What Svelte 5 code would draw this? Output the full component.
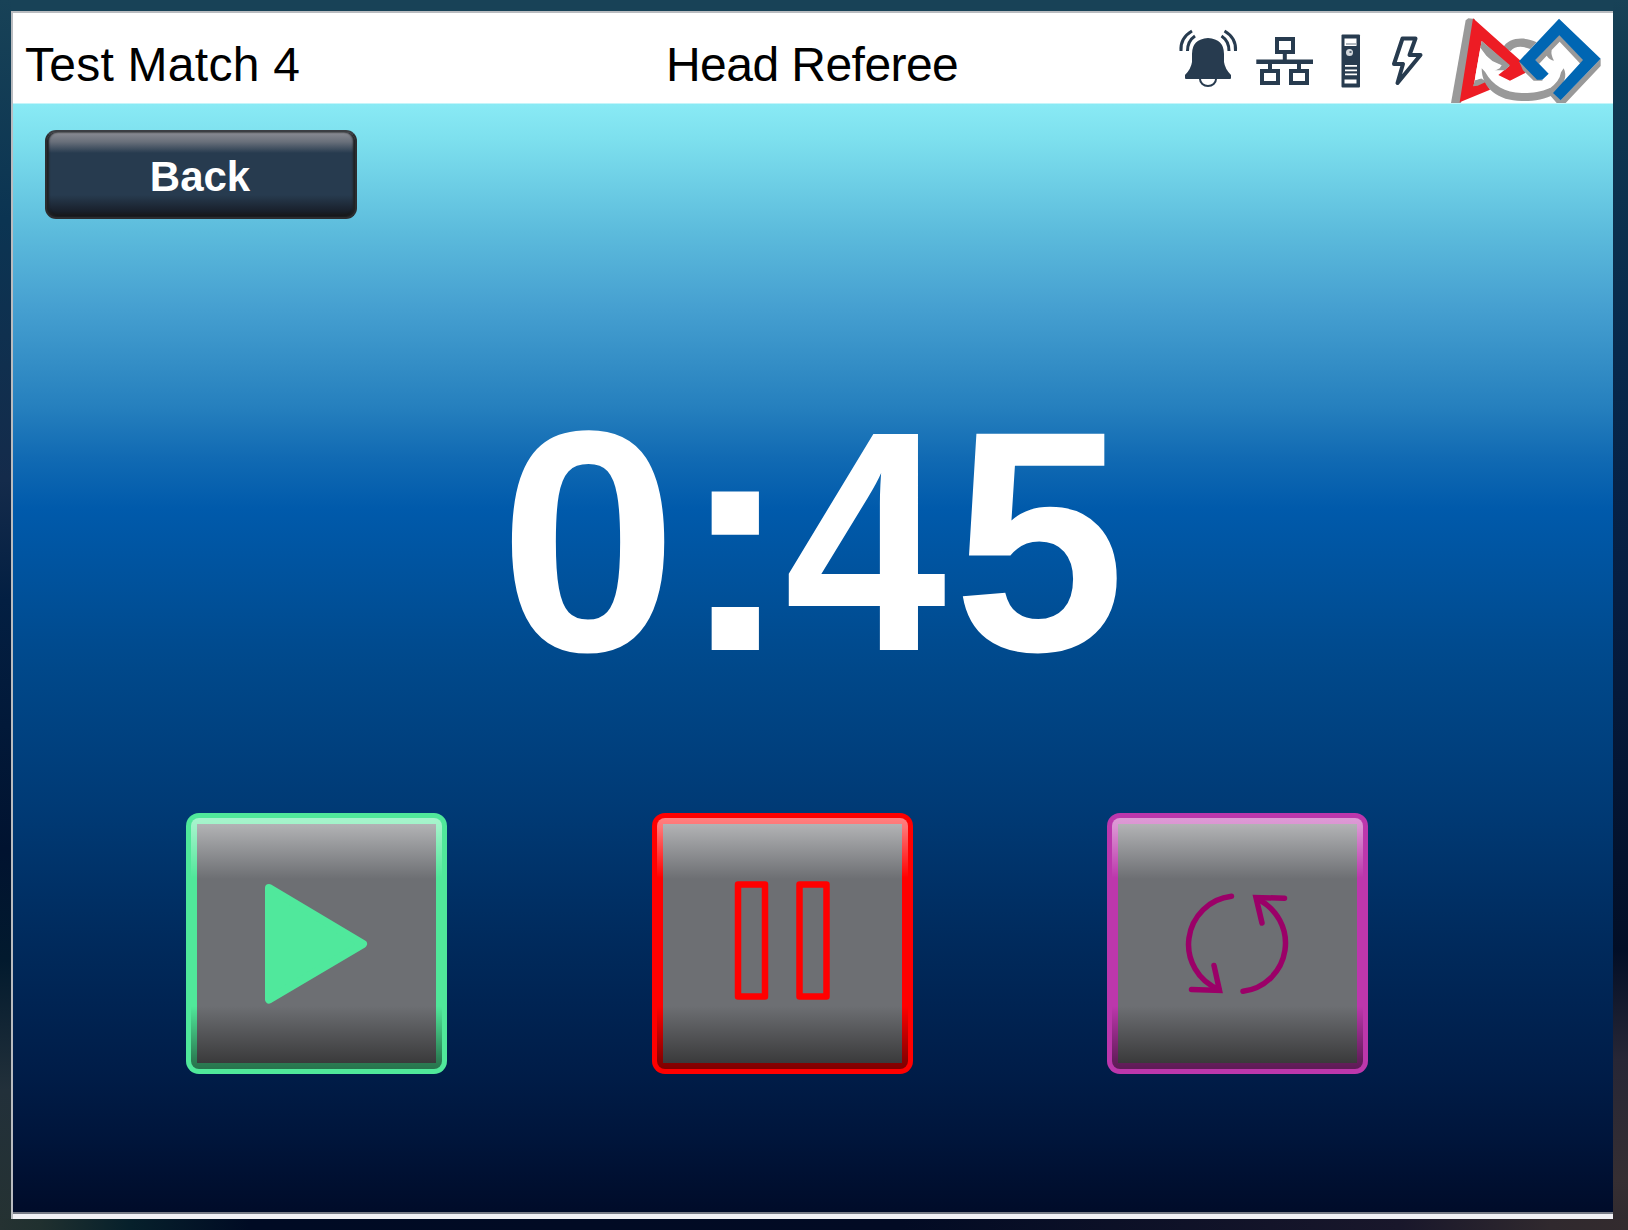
<script>
  const title = 'Test Match 4';
  const role = 'Head Referee';
  const digits = [
    { char: '0', kind: 'zero' },
    { char: ':', kind: 'colon' },
    { char: '4', kind: 'four' },
    { char: '5', kind: 'five' },
  ];
</script>

<main>
  <section class="panel">
    <header>
      <span class="match">{title}</span>
      <h1>{role}</h1>
      <div class="status">
        <svg class="icons" viewBox="1170 11 260 92" aria-hidden="true">
          <g fill="#273b4f">
            <path d="M1185 78v-3q6-6 7-13V54q0-15 16-16q16 1 16 16v8q1 7 7 13v3q0 1-1 1h-44q-1 0-1-1z" />
            <g fill="none" stroke="#273b4f">
              <path d="M1200 79a8 7 0 0 0 16 0" stroke-width="2" />
              <path stroke-width="3" d="M1181 51q-1-13 11-20M1187.500 51q0-10 7.500-15M1235.500 51q1-13-11-20M1229 51q0-10-7.500-15" />
              <path stroke-width="4" d="M1277 39h16v13h-16zM1262 71h16v12h-16zM1291 71h16v12h-16zM1284.800 54v8M1270 63v7M1299 63v7" />
              <path stroke-width="4.500" d="M1256.300 61.800h56.700" />
              <path stroke-width="4" stroke-linejoin="round" d="M1402.500 38.500h13l-6 16.500h11l-23 28l5.500-19h-9z" />
            </g>
            <rect x="1341.500" y="34.500" width="18.500" height="53" rx="1" />
            <g fill="#fff">
              <path d="M1344.500 38.500h12v7.500h-12zM1345 65h12v1.800h-12zM1345 69.500h12v1.800h-12zM1345 73.500h12v1.800h-12zM1344.500 79.500h12v4h-12z" />
              <circle cx="1349.500" cy="52.500" r="3.500" opacity=".8" />
            </g>
            <path d="M1346 43.500h10v1h-10zM1349.500 51h2v2h-2z" opacity=".7" />
          </g>
        </svg>
        <svg class="logo" viewBox="-15 0 489 276" aria-hidden="true">
          <path fill="#999" d="M32 28L40 22L60 24L18 276H-12Z" />
          <path fill="#999" d="M143 112C160 78 210 76 245 94L226 114C200 104 180 105 167 120Z" />
          <path fill="#ed1c24" d="M54 22L195 148L212 185L165 209L130 192L163 165L80 90L56 224L90 210L105 236L14 274Z" />
          <path fill="#999" d="M80 90L165 163L150 178H116L137 163L110 152L90 132L76 112Z" />
          <path fill="#999" d="M54 226L60 208L78 202L94 212L68 224Z" />
          <path fill="#fff" d="M62 190L76 110L94 134L112 150L140 163L134 172L118 180C130 200 150 212 165 211L212 189L248 210L282 190L244 150L292 132L330 178C320 205 305 225 285 234C255 246 225 248 200 247C150 244 110 225 92 185L78 170L80 202L60 208Z" />
          <path fill="#999" d="M80 172C80 232 130 270 200 270C235 270 270 266 300 248L285 231C255 244 225 247 200 246C150 244 114 224 90 182Z" />
          <path fill="#999" d="M326 172Q335 190 328 208Q318 232 298 247L283 233Q314 212 318 184Z" />
          <path fill="#999" d="M192 151L204 178L236 209H264L250 200ZM437 143V165L331 277H306L281 248L294 244L317 267Z" />
          <path fill="#999" d="M313 71L386 147L376 158L314 92L290 117Q287 132 297 149Q285 148 275 134L252 159L240 147Z" />
          <path fill="#0066b3" d="M312 23L437 143L317 268L294 246L384 147L313 73L241 147L281 188L262 206H246L192 151Z" />
        </svg>
      </div>
    </header>

    <div class="body">
      <button class="back">Back</button>
      <div class="clock">
        {#each digits as digit}<span class={digit.kind}>{digit.char}</span>{/each}
      </div>
      <div class="controls">
        <button class="control play" aria-label="Play">
          <span class="bevel"><span class="face">
            <svg viewBox="11 11 239 239"><path d="M83 75L177 131L83 186.500Z" fill="#50e89c" stroke="#50e89c" stroke-width="8" stroke-linejoin="round" /></svg>
          </span></span>
        </button>
        <button class="control pause" aria-label="Pause">
          <span class="bevel"><span class="face">
            <svg viewBox="11 11 239 239"><path d="M86 71.500h27v112h-27zM147.500 71.500h27v112h-27z" fill="none" stroke="#f00" stroke-width="6.500" stroke-linejoin="round" /></svg>
          </span></span>
        </button>
        <button class="control reset" aria-label="Reset">
          <span class="bevel"><span class="face">
            <svg viewBox="11 11 239 239"><g fill="none" stroke="#9b0068" stroke-width="5.500" stroke-linecap="round"><path d="M124.500 83.300A48.500 48.500 0 0 0 112 176.500M136 178.300A48.500 48.500 0 0 0 150 86" /><path d="M84.500 176.500L112.500 177.500L107 152.500M177.500 85.200L149 84.500L155 110" /></g></svg>
          </span></span>
        </button>
      </div>
    </div>
  </section>
</main>

<style>
  :global(body) { margin: 0; }
  main {
    box-sizing: border-box;
    width: 1628px;
    height: 1230px;
    padding: 11px 15px 11px 11px;
    font-family: 'Liberation Sans', Arial, sans-serif;
    background:
      linear-gradient(90deg, #253232 0, #20302f 40px, #06202b 130px, #000b24 250px, #020b24 900px, #19172b 1400px, #30292e 1550px, #332b2e) 0 100% / 100% 11px no-repeat,
      linear-gradient(#184257 0, #103850 80px, #07284b 350px, #061d40 600px, #020e26 950px, #272635 1060px, #352e32 1180px, #302a2e) 100% 0 / 15px 100% no-repeat,
      linear-gradient(#184257 0, #0b3452 220px, #142b4b 480px, #031f42 600px, #011330 850px, #021a2e 960px, #22303a 1090px, #253232) 0 0 / 11px 100% no-repeat,
      #184257;
  }
  .panel {
    box-sizing: border-box;
    height: 1208px;
    display: flex;
    flex-direction: column;
    border: solid #b9bcc0;
    border-width: 2px 0 0 2px;
    background: #f1f1f5;
  }
  header {
    box-sizing: border-box;
    height: 91px;
    padding-left: 12px;
    display: grid;
    grid-template-columns: 641px 1fr auto;
    align-items: start;
    border-bottom: 1px solid #c4f5fa;
    background: #fff;
    color: #000;
    font-size: 48px;
  }
  .match, h1 { margin: 24px 0 0; font: inherit; line-height: 56px; white-space: nowrap; }
  .match { letter-spacing: 0.25px; }
  h1 { letter-spacing: -0.55px; }
  .status { display: flex; height: 92px; margin-top: -2px; }
  .icons { width: 260px; height: 92px; margin-right: 20px; }
  .logo { width: 163px; height: 92px; }
  .body {
    height: 1110px;
    box-sizing: border-box;
    display: flex;
    flex-direction: column;
    padding-top: 26px;
    border-bottom: 2px solid #777b86;
    background: linear-gradient(#89eaf5 0, #7de0ee 35px, #5cbbdc 128px, #47a1d1 200px, #2680be 302px, #116ab3 354px, #005aab 405px, #00488a 565px, #003a75 705px, #002a5c 840px, #001c47 975px, #00153b 1035px, #000c2a 1105px);
  }
  button { box-sizing: border-box; padding: 0; border: 0; font-family: inherit; }
  .back {
    width: 312px;
    height: 89px;
    margin-left: 32px;
    padding-top: 5px;
    padding-right: 2px;
    border: 2px solid #2b2d30;
    border-top-color: #3b3e43;
    border-radius: 11px;
    color: #fff;
    font-size: 42px;
    font-weight: bold;
    line-height: 48px;
    background: linear-gradient(#8b8d94 0, #686f7a 10px, #273b4f 21px, #273b4f 63px, #1a222e 78px, #17191c 100%);
    box-shadow: inset 2px 0 2px #202225, inset -2px 0 2px #202225, inset 0 -3px 2px #191b1d;
  }
  .clock {
    height: 360px;
    margin: 143px 0 0 486px;
    display: flex;
    color: #fff;
    font-size: 314px;
    font-weight: bold;
    line-height: 360px;
  }
  .zero { transform: translateX(2px) scale(1.02, 1.005); }
  .colon { transform: translateX(9px) scaleX(1.07); }
  .four { transform: scaleX(0.927); }
  .five { transform: translateX(-1px) scale(0.985, 1.003); }
  .controls {
    margin: 91px 0 0 173px;
    display: grid;
    grid-template-columns: 466px 455px 261px;
  }
  .control {
    width: 261px;
    height: 261px;
    padding: 5px;
    border-radius: 13px;
    background: var(--edge);
  }
  .bevel {
    display: block;
    padding: 6px;
    border-radius: 8px;
    background: linear-gradient(rgb(255 255 255 / 50%) 0, rgb(255 255 255 / 45%) 10px, transparent 60px, transparent 188px, rgb(0 0 0 / 45%) 241px, rgb(0 0 0 / 50%));
  }
  .face {
    display: block;
    height: 239px;
    background: linear-gradient(#b2b3b5 0, #6d6f73 55px, #6d6f73 182px, #3a3a3b 100%);
  }
  .face svg { display: block; width: 239px; height: 239px; }
  .play { --edge: #50e89a; }
  .pause { --edge: #f00; }
  .reset { --edge: #bc37ac; }
</style>
